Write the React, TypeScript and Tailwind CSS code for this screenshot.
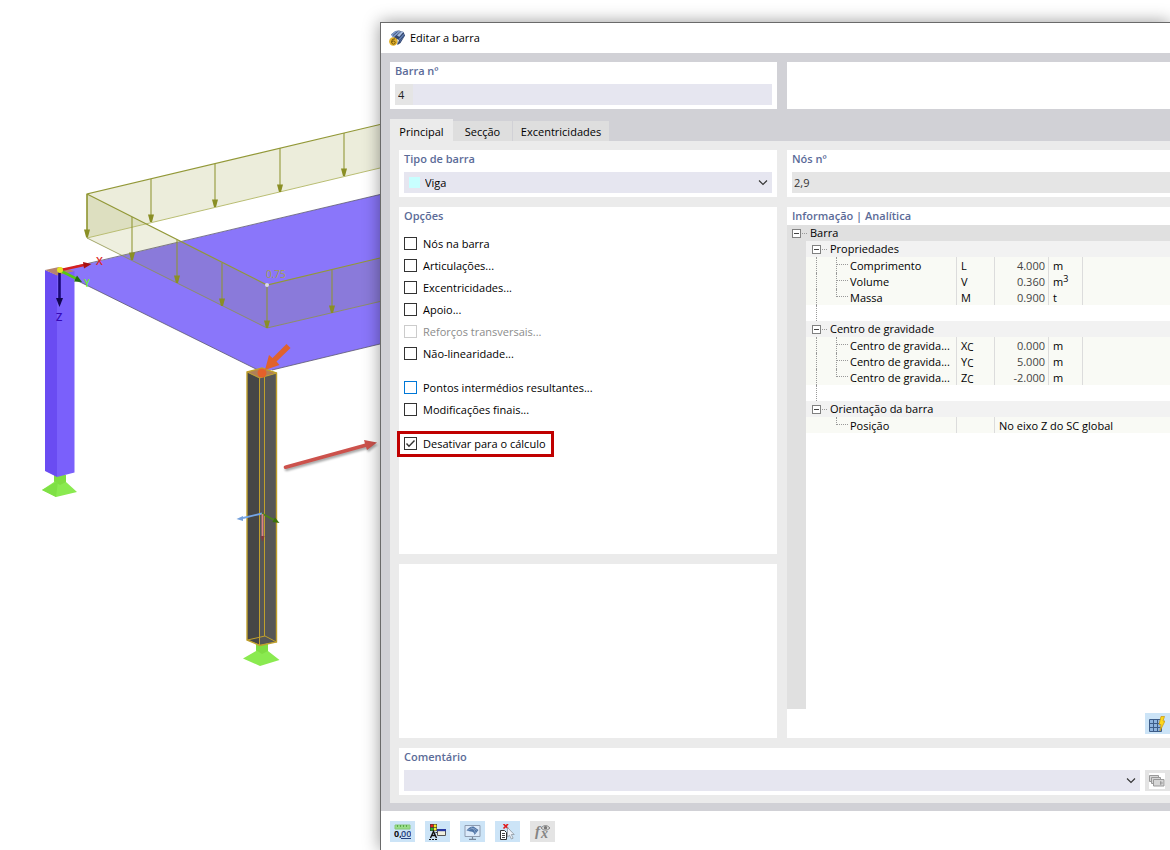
import { type ReactNode } from "react";
import clsx from "clsx";

const arrowsBack = [
  { x: 151, top: 179, bottom: 222 },
  { x: 215, top: 164, bottom: 207 },
  { x: 280, top: 148, bottom: 192 },
  { x: 344, top: 133, bottom: 176 },
];

const arrowsFront = [
  { x: 87, top: 194, bottom: 237 },
  { x: 132, top: 217, bottom: 260 },
  { x: 177, top: 240, bottom: 283 },
  { x: 222, top: 263, bottom: 306 },
  { x: 267, top: 285, bottom: 328 },
  { x: 332, top: 270, bottom: 313 },
];

function LoadArrow({ x, top, bottom }: { x: number; top: number; bottom: number }) {
  return (
    <g>
      <path d={`M${x} ${top}V${bottom - 6}`} stroke="#8f9530" strokeOpacity="0.75" strokeWidth="1.4" />
      <path d={`M${x - 3} ${bottom - 7.5}h6l-2 7.5h-2z`} fill="#8a8f25" />
    </g>
  );
}

function Scene() {
  return (
    <svg className="block h-[850px] w-[380px]" viewBox="0 0 380 850" fill="none" role="img" aria-label="Modelo 3D">
      {/* slab */}
      <path d="M62 270L380 194.500V344L272 370H258L74 279z" fill="#8a76fa" />
      <path d="M75 266.500L380 194.500M74 279L258 370M272 370L380 344" stroke="#5c5870" strokeWidth="0.8" />

      {/* line load */}
      <path d="M87 194L380 124.500V168L87 238z" fill="#8d952b" fillOpacity="0.17" />
      <path d="M87 194L267 285V328L87 238z" fill="#8d952b" fillOpacity="0.15" />
      <path d="M267 285L380 258V301.500L267 328z" fill="#8d952b" fillOpacity="0.15" />
      <path d="M87 238L380 168" stroke="#b9bd72" />
      <path d="M87 238L267 328L380 301.500" stroke="#8f9348" strokeOpacity="0.8" />
      <path d="M87 238V194L380 124.500M87 194L267 285L380 258" stroke="#929837" strokeWidth="1.200" />
      {arrowsBack.map((a) => (
        <LoadArrow key={a.x} {...a} />
      ))}
      {arrowsFront.map((a) => (
        <LoadArrow key={a.x} {...a} />
      ))}
      <circle cx="267" cy="285" r="2" fill="#dcdce8" />
      <text x="266" y="278" fontSize="10" fill="#a5a148" className="font-['Open_Sans',sans-serif]">
        0.75
      </text>

      {/* left column */}
      <path d="M54 475H66V482L77 492L56 497L42 490L54 482z" fill="#8aea50" />
      <path d="M54 475H66V482L60 485L54 481z" fill="#7fdd42" />
      <path d="M56 497L42 490L58 481z" fill="#7fe045" />
      <path d="M45 270L57 275V477L45 471z" fill="#6a4cf2" />
      <path d="M57 275L74.500 271V472.500L57 477z" fill="#7a60fb" />
      <path d="M45 270L59 267L74.500 271L57 275.500z" fill="#b5836f" />

      {/* global axes */}
      <path d="M61 270L84 265" stroke="#d42020" strokeWidth="2.600" />
      <path d="M83 262L91.500 264L84 268.500z" fill="#a81010" />
      <path d="M61 271L76 278.500" stroke="#56c812" strokeWidth="2.600" />
      <path d="M77 275.500L82 282L74 281.500z" fill="#24700c" />
      <path d="M59.500 272V299" stroke="#1a0878" strokeWidth="2.600" />
      <path d="M56 298H63L59.500 307z" fill="#120550" />
      <circle cx="60" cy="270" r="3" fill="#e4e422" />
      <g className="font-['Open_Sans',sans-serif] font-semibold" fontSize="11">
        <text x="96" y="265" fill="#dc2828">X</text>
        <text x="84" y="287" fontSize="10" fill="#68ec38">Y</text>
        <text x="56" y="321" fill="#3508b8">Z</text>
      </g>

      {/* selected column */}
      <path d="M256 644H268V651L279.500 660L260 666L243 658.500L256 651z" fill="#8aea50" />
      <path d="M256 644H268V651L262 654L256 650z" fill="#7fdd42" />
      <path d="M247 372L259.500 377.500V645L247 640z" fill="#464646" />
      <path d="M259.500 377.500L277 373V642L259.500 645z" fill="#565656" />
      <path d="M247 372L262 368L277 373L259.500 378z" fill="#b08058" />
      <g stroke="#c0a02c">
        <path d="M247 372L262 368L276.500 373V642L260 645.500L247 640z" strokeWidth="1.400" />
        <path d="M247 372L259.500 378L277 373M259.500 378V645M264.500 376V636M247.500 640L265 636L276.500 642" />
      </g>

      {/* member axes */}
      <path d="M262 513.500L243 518" stroke="#74a6e8" strokeWidth="1.800" />
      <path d="M236.500 519L243 516V521z" fill="#74a0dc" />
      <path d="M262 513.500L274 520" stroke="#4c8418" strokeWidth="1.800" />
      <path d="M275 517.500L279.500 523L272.500 522z" fill="#3a7008" />
      <path d="M262.500 514V537" stroke="#dc8484" strokeWidth="1.800" />
      <path d="M260.500 536H264.500L262.500 542z" fill="#803c44" />

      {/* picked node */}
      <circle cx="262" cy="373" r="4.500" fill="#e4602a" />
      <path d="M286.500 344L290.500 348L276.500 361.500L279.500 365L265 370L269 355L272.500 358z" fill="#e0622c" />

      {/* callout arrow */}
      <g className="drop-shadow-[1px_2px_1px_rgba(0,0,0,0.35)]">
        <path d="M285 465.500L365 443.500L364 440L377 442.500L367 450L366 447L286 469A1.700 1.700 0 0 1 285 465.500z" fill="#cc524c" />
      </g>
    </svg>
  );
}

function Chevron() {
  return (
    <svg className="pointer-events-none h-[7px] w-[10px] shrink-0" viewBox="0 0 10 7" fill="none" stroke="#333" strokeWidth="1.100">
      <path d="M1 1.500L5 5.500L9 1.500" />
    </svg>
  );
}

function BarIcon() {
  return (
    <svg className="size-4" viewBox="0 0 16 16">
      <path d="M2 4.500L6.500 1L10 .5L14.500 2L16 5.500L11.500 13L8.500 15L7 10z" fill="#34466e" />
      <path d="M2 4.500L6.500 1H11L7.500 5L4 8z" fill="#7f9acb" />
      <path d="M7.500 5L11 1L14.500 2L10.500 7z" fill="#a9bfe2" />
      <path d="M10 8.500L14.500 3.500L15.500 6L11 12z" fill="#5f7db2" />
      <path d="M4 5.500L8.500 1.500M7.500 5.500L12 1.500M9.500 8L14.500 3M10.500 11L15.500 5" stroke="#263658" strokeWidth="0.700" />
      <path d="M8 9l2 1-1.500 4.500z" fill="#e4ebf6" />
      <circle cx="4.300" cy="11.500" r="4.200" fill="#e3b22c" />
      <path d="M6 8.800Q2.500 8.500 2.600 12Q2.800 14.200 4.500 14.200Q6.300 14 6.200 12.400Q6 11 4.500 11Q3 11 2.700 12.200" fill="none" stroke="#705408" />
    </svg>
  );
}

function UnitsIcon() {
  return (
    <svg className="h-4 w-[17px]" viewBox="0 0 17 16">
      <path d="M1 1h15v4H1z" fill="#98de88" stroke="#86c878" />
      <path d="M3.500 1v2M6.500 1v2M9.500 1v2M12.500 1v2" stroke="#5aa84a" />
      <text x="0" y="13" fontSize="9" fontWeight="700" fill="#111" className="font-['Open_Sans',sans-serif]">0,</text>
      <text x="7" y="13" fontSize="9" fontWeight="600" fill="#23407e" className="font-['Open_Sans',sans-serif]">00</text>
      <path d="M7 14.500H17" stroke="#23407e" />
    </svg>
  );
}

function DisplayIcon() {
  return (
    <svg className="h-4 w-[17px]" viewBox="0 0 17 16">
      <path d="M1 0h7v7H1z" fill="#333" />
      <path d="M1.500.5h2.700v2.700H1.500z" fill="#e82020" />
      <path d="M4.800.5h2.700v2.700H4.800z" fill="#f6e820" />
      <path d="M1.500 3.800h2.700v2.700H1.500z" fill="#28b428" />
      <path d="M4.800 3.800h2.700v2.700H4.800z" fill="#f4ec40" />
      <path d="M1.500 14L4.500 7.500l3 6.500M2.500 11.500h4" fill="none" stroke="#111" strokeWidth="1.400" />
      <path d="M0 15.500h9" stroke="#111" strokeDasharray="2 1" />
      <path d="M6.500 8.500h2.500" stroke="#333" />
      <path d="M8.500 6h8v5.500h-8z" fill="#f0eedc" stroke="#555" />
      <path d="M8 5h9v2.200H8z" fill="#2838a0" />
    </svg>
  );
}

function ScreenIcon() {
  return (
    <svg className="h-4 w-[17px]" viewBox="0 0 17 16">
      <path d="M1 1.500h15v11H1z" fill="#dceafa" stroke="#8e9cb0" />
      <path d="M8.500 13v2M5 15.300h7" stroke="#77869a" strokeWidth="1.200" />
      <path d="M2.500 6.500Q6 2 9.500 2.500L14.500 6L10.500 11Q10.500 7.500 6.500 7.500Q4 7 2.500 6.500z" fill="#4f74a6" />
      <path d="M3.500 6.500Q7 4 10 4.500l3 2M7 3.500Q11 5 11.500 9" fill="none" stroke="#93aed0" strokeWidth="0.700" />
    </svg>
  );
}

function PickIcon() {
  return (
    <svg className="h-4 w-[17px]" viewBox="0 0 17 16">
      <path d="M1.500 6.500h4l2 2v7h-6z" fill="#fff" stroke="#333" />
      <path d="M3 9.500h3M3 11.500h3M3 13.500h3" stroke="#444" />
      <path d="M4.500 0l4.500 4.500M9 0L4.500 4.500" stroke="#e02020" strokeWidth="1.700" />
      <path d="M8.500 3.500v9.500l2-1.800 1.900 3.800 1.700-.8-1.800-3.700h2.900z" fill="#eef3fa" stroke="#8e979f" strokeWidth="0.800" />
    </svg>
  );
}

function FormulaIcon() {
  return (
    <svg className="h-4 w-[17px]" viewBox="0 0 17 16">
      <text x="1" y="12" fontSize="15" fontStyle="italic" fontWeight="700" fill="#858585" className="font-['Liberation_Serif',serif]">f</text>
      <text x="7" y="14" fontSize="14" fontStyle="italic" fontWeight="700" fill="#858585" className="font-['Liberation_Serif',serif]">x</text>
      <path d="M7 4Q11.500-1 16 4Q11.500 8.500 7 4z" fill="#ddd" stroke="#858585" />
      <circle cx="11.500" cy="3.800" r="1.700" fill="#777" />
    </svg>
  );
}

function GridBoltIcon() {
  return (
    <svg className="size-4" viewBox="0 0 16 16">
      <path d="M.5 3.500h12v12H.5z" fill="#8fb4de" stroke="#3c5c88" />
      <path d="M4.500 3v12.500M8.500 3v12.500M0 7.500h12.500M0 11.500h12.500" stroke="#3c5c88" />
      <path d="M12 .5h3.500L14 5h2l-5 10 1-6.500h-2z" fill="#fcd81c" stroke="#c89410" strokeWidth="0.700" />
    </svg>
  );
}

function CommentsIcon() {
  return (
    <svg className="size-4 bg-white" viewBox="0 0 16 16" fill="#d6d6d6" stroke="#999">
      <path d="M.5 2.500h9v6h-9z" />
      <path d="M2.500 4.500h9v6h-9z" />
      <path d="M4.500 6.500h10.500v6.500H4.500z" />
      <path d="M11.500 8.500L13.500 10L11.500 11.500z" fill="#fff" />
    </svg>
  );
}

function IconButton({ label, disabled, children }: { label: string; disabled?: boolean; children: ReactNode }) {
  return (
    <button
      type="button"
      aria-label={label}
      disabled={disabled}
      className={clsx("flex h-[21px] w-[25px] shrink-0 items-center pl-1", disabled ? "bg-[#e4e4e4]" : "bg-[#cce4f7]")}
    >
      {children}
    </button>
  );
}

function PanelTitle({ htmlFor, children }: { htmlFor?: string; children: ReactNode }) {
  const style = "block h-[18px] leading-[18px] font-semibold text-[#5b6b98]";
  return htmlFor ? (
    <label htmlFor={htmlFor} className={style}>
      {children}
    </label>
  ) : (
    <h2 className={style}>{children}</h2>
  );
}

type Option = { name: string; checked?: boolean; disabled?: boolean; focused?: boolean; marked?: boolean };

const optionGroups: Option[][] = [
  [
    { name: "Nós na barra" },
    { name: "Articulações..." },
    { name: "Excentricidades..." },
    { name: "Apoio..." },
    { name: "Reforços transversais...", disabled: true },
    { name: "Não-linearidade..." },
  ],
  [{ name: "Pontos intermédios resultantes...", focused: true }, { name: "Modificações finais..." }],
  [{ name: "Desativar para o cálculo", checked: true, marked: true }],
];

function CheckOption({ option }: { option: Option }) {
  return (
    <label
      className={clsx(
        "flex w-max items-center gap-[6px]",
        option.marked ? "-mx-[7px] -my-[2px] h-[26px] border-3 border-[#c00000] pr-[5px] pl-1" : "h-[22px]",
        option.disabled && "text-[#8c8c8c]",
      )}
    >
      <span className="grid pb-px">
        <input
          type="checkbox"
          defaultChecked={option.checked}
          disabled={option.disabled}
          className={clsx(
            "peer col-start-1 row-start-1 size-[13px] appearance-none border bg-white",
            option.focused ? "border-[#0078d7]" : option.disabled ? "border-[#cccccc]" : "border-[#333333]",
          )}
        />
        <svg
          className="pointer-events-none invisible col-start-1 row-start-1 size-[13px] peer-checked:visible"
          viewBox="0 0 13 13"
          fill="none"
          stroke="#333"
          strokeWidth="1.400"
        >
          <path d="M2.500 6.500L5 9.300L10.500 3.500" />
        </svg>
      </span>
      {option.name}
    </label>
  );
}

type Row = { label: string; symbol?: ReactNode; value: string; unit?: ReactNode };

function AxisSymbol({ axis }: { axis: string }) {
  return (
    <>
      {axis}
      <sub className="-bottom-px text-[10px]">C</sub>
    </>
  );
}

const sections: { title: string; rows: Row[] }[] = [
  {
    title: "Propriedades",
    rows: [
      { label: "Comprimento", symbol: "L", value: "4.000", unit: "m" },
      { label: "Volume", symbol: "V", value: "0.360", unit: <>m<sup className="text-[9px]">3</sup></> },
      { label: "Massa", symbol: "M", value: "0.900", unit: "t" },
    ],
  },
  {
    title: "Centro de gravidade",
    rows: [
      { label: "Centro de gravida...", symbol: <AxisSymbol axis="X" />, value: "0.000", unit: "m" },
      { label: "Centro de gravida...", symbol: <AxisSymbol axis="Y" />, value: "5.000", unit: "m" },
      { label: "Centro de gravida...", symbol: <AxisSymbol axis="Z" />, value: "-2.000", unit: "m" },
    ],
  },
  {
    title: "Orientação da barra",
    rows: [{ label: "Posição", value: "No eixo Z do SC global" }],
  },
];

function Toggle({ name }: { name: string }) {
  return (
    <>
      <button
        type="button"
        aria-label={`Recolher ${name}`}
        className="flex size-[9px] shrink-0 items-center justify-center border border-[#808080] bg-white"
      >
        <span className="h-px w-[5px] bg-[#444]" />
      </button>
      <span className="mr-[3px] ml-px w-[5px] border-t border-dotted border-[#999]" />
    </>
  );
}

function SectionRows({ title, rows, last }: { title: string; rows: Row[]; last: boolean }) {
  return (
    <tbody>
      <tr className="h-4 bg-[#f2f2f2]">
        <td className="bg-[#e0e0e0]" />
        <td colSpan={5}>
          <div className="flex h-4 items-center pl-[6px] leading-[18px]">
            <Toggle name={title} />
            {title}
          </div>
        </td>
      </tr>
      {rows.map((row, i) => (
        <tr key={i} className="h-4 bg-[#f9faf5]">
          <td className="bg-[#e0e0e0]" />
          <td>
            <div className="flex h-4 pl-[10px] leading-[18px] whitespace-nowrap">
              <span className={clsx("w-5 shrink-0 border-dotted border-[#999]", !last && "border-l")} />
              <span className={clsx("w-3 shrink-0 border-l border-dotted border-[#999]", i === rows.length - 1 && "h-2")}>
                <span className="block h-2 border-b border-dotted border-[#999]" />
              </span>
              <span className="pl-[2px]">{row.label}</span>
            </div>
          </td>
          <td className="border-l border-[#dcdcdc] pl-1">
            <div className="h-4 leading-[18px]">{row.symbol}</div>
          </td>
          {row.unit ? (
            <>
              <td className="border-l border-[#dcdcdc] pr-[3px] text-right font-medium text-[#444]">
                <div className="h-4 leading-[18px]">{row.value}</div>
              </td>
              <td className="border-l border-[#dcdcdc] pl-1">
                <div className="h-4 leading-[18px]">{row.unit}</div>
              </td>
              <td className="border-l border-[#dcdcdc]" />
            </>
          ) : (
            <td colSpan={3} className="border-l border-[#dcdcdc] pl-1">
              <div className="h-4 leading-[18px]">{row.value}</div>
            </td>
          )}
        </tr>
      ))}
      {!last && (
        <tr className="h-4">
          <td className="bg-[#e0e0e0]" />
          <td colSpan={5}>
            <div className="flex h-4 pl-[10px]">
              <span className="border-l border-dotted border-[#999]" />
            </div>
          </td>
        </tr>
      )}
    </tbody>
  );
}

function InfoTable() {
  return (
    <table className="w-full table-fixed border-separate border-spacing-0">
      <colgroup>
        <col className="w-[19px]" />
        <col className="w-[150px]" />
        <col className="w-[38px]" />
        <col className="w-[54px]" />
        <col className="w-[34px]" />
        <col />
      </colgroup>
      <tbody>
        <tr className="h-4 bg-[#e0e0e0]">
          <td colSpan={6}>
            <div className="flex h-4 items-center pl-[5px] leading-[18px]">
              <Toggle name="Barra" />
              Barra
            </div>
          </td>
        </tr>
      </tbody>
      {sections.map((section, i) => (
        <SectionRows key={section.title} {...section} last={i === sections.length - 1} />
      ))}
    </table>
  );
}

function EditDialog() {
  return (
    <section
      aria-label="Editar a barra"
      className="relative mt-[22px] flex min-w-0 flex-1 flex-col border-t border-l border-[#6a6a6a] bg-white shadow-[0_0_16px_rgba(0,0,0,0.4)]"
    >
      <header className="flex h-[30px] items-center gap-[5px] pl-2">
        <BarIcon />
        <h1>Editar a barra</h1>
      </header>

      <div className="flex flex-1 flex-col bg-[#d1d1d6] pt-[9px] pb-2 pl-[9px]">
        <div className="flex gap-[10px]">
          <div className="w-[387px] shrink-0 bg-white px-[5px] pb-1">
            <PanelTitle htmlFor="member-no">Barra nº</PanelTitle>
            <div className="mt-1 flex h-[21px] bg-[#e6e6f0]">
              <input id="member-no" defaultValue="4" className="w-[18px] bg-[#e5e5e5] pl-[3px] font-medium text-[#222]" />
            </div>
          </div>
          <div className="flex-1 bg-white" />
        </div>

        <div role="tablist" className="mt-[10px] flex items-end">
          <button type="button" role="tab" aria-selected="true" className="h-[22px] w-[63px] bg-[#ebebeb] pt-1">
            Principal
          </button>
          <button type="button" role="tab" aria-selected="false" className="h-5 w-[59px] bg-[#dedede] pt-[2px]">
            Secção
          </button>
          <button type="button" role="tab" aria-selected="false" className="ml-px h-5 w-[96px] bg-[#dedede] pt-[2px]">
            Excentricidades
          </button>
        </div>

        <div className="flex flex-1 flex-col gap-[10px] bg-[#ebebeb] pt-[9px] pb-2 pl-[9px]">
          <div className="flex flex-1 gap-[10px]">
            <div className="flex w-[378px] shrink-0 flex-col gap-[10px]">
              <div className="bg-white px-[5px] pb-1">
                <PanelTitle htmlFor="member-type">Tipo de barra</PanelTitle>
                <div className="mt-1 flex h-[21px] items-center gap-[5px] bg-[#e6e6f0] px-1">
                  <span className="ml-px size-[11px] bg-[#c8ffff]" />
                  <select id="member-type" className="h-full flex-1 appearance-none">
                    <option>Viga</option>
                  </select>
                  <Chevron />
                </div>
              </div>

              <div className="flex-[2] bg-white px-[5px]">
                <PanelTitle>Opções</PanelTitle>
                <div className="mt-2 flex flex-col gap-3">
                  {optionGroups.map((group, i) => (
                    <div key={i}>
                      {group.map((option) => (
                        <CheckOption key={option.name} option={option} />
                      ))}
                    </div>
                  ))}
                </div>
              </div>

              <div className="flex-1 bg-white" />
            </div>

            <div className="flex min-w-0 flex-1 flex-col gap-[10px]">
              <div className="bg-white pb-1 pl-[5px]">
                <PanelTitle htmlFor="nodes-no">Nós nº</PanelTitle>
                <input
                  id="nodes-no"
                  readOnly
                  value="2,9"
                  className="mt-1 block h-[21px] w-full bg-[#e5e5e5] pl-[2px] font-medium text-[#333]"
                />
              </div>

              <div className="flex flex-1 flex-col bg-white">
                <div className="pl-[5px]">
                  <PanelTitle>Informação | Analítica</PanelTitle>
                </div>
                <InfoTable />
                <div className="w-[19px] flex-1 bg-[#e0e0e0]" />
                <div className="mt-1 mb-1 flex justify-end">
                  <IconButton label="Mostrar na grelha">
                    <GridBoltIcon />
                  </IconButton>
                </div>
              </div>
            </div>
          </div>

          <div className="bg-white pb-1 pl-[5px]">
            <PanelTitle htmlFor="comment">Comentário</PanelTitle>
            <div className="mt-1 flex gap-[5px]">
              <div className="flex h-[21px] flex-1 items-center bg-[#e6e6f0] px-1">
                <select id="comment" className="h-full flex-1 appearance-none">
                  <option></option>
                </select>
                <Chevron />
              </div>
              <IconButton label="Comentários guardados" disabled>
                <CommentsIcon />
              </IconButton>
            </div>
          </div>
        </div>
      </div>

      <footer className="flex h-[39px] gap-[10px] pt-[10px] pl-[9px]">
        <IconButton label="Unidades e casas decimais">
          <UnitsIcon />
        </IconButton>
        <IconButton label="Propriedades de visualização">
          <DisplayIcon />
        </IconButton>
        <IconButton label="Vista">
          <ScreenIcon />
        </IconButton>
        <IconButton label="Selecionar">
          <PickIcon />
        </IconButton>
        <IconButton label="Fórmula" disabled>
          <FormulaIcon />
        </IconButton>
      </footer>
    </section>
  );
}

export default function App() {
  return (
    <main className="flex min-h-screen overflow-hidden bg-white font-['Open_Sans','Noto_Sans',sans-serif] text-[11px] leading-4 text-black">
      <div className="shrink-0">
        <Scene />
      </div>
      <EditDialog />
    </main>
  );
}
